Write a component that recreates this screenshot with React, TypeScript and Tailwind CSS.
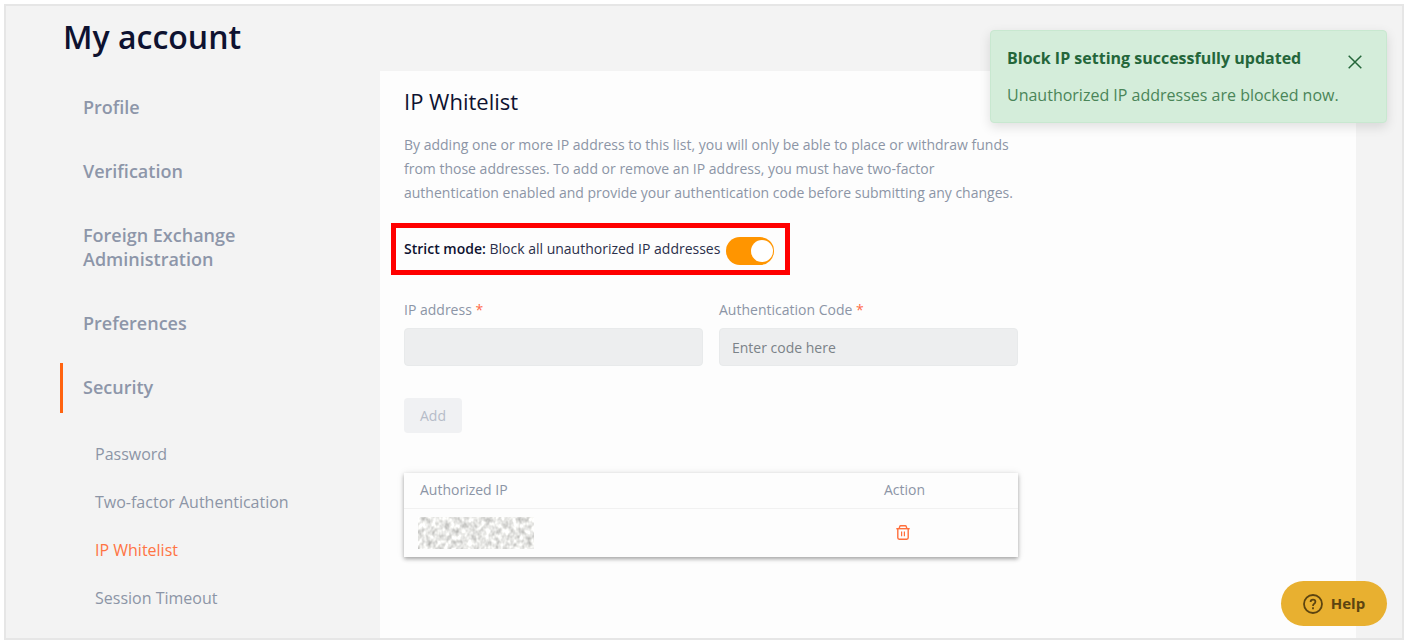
import { useState } from "react";

const sections = ["Profile", "Verification", "Foreign Exchange Administration", "Preferences", "Security"];
const securityPages = ["Password", "Two-factor Authentication", "IP Whitelist", "Session Timeout"];

function TrashIcon() {
  return (
    <svg viewBox="0 0 14 15" className="h-[15px] w-[14px]" fill="none" stroke="currentColor" strokeWidth="1.4" aria-hidden="true">
      <path d="M0.3 3.7H13.7" />
      <path d="M3.2 3.4L3.7 1.6Q3.9 0.8 4.8 0.8H9.2Q10.1 0.8 10.3 1.6L10.8 3.4" />
      <path d="M1.8 3.9V12.8Q1.8 14.2 3.2 14.2H10.8Q12.2 14.2 12.2 12.8V3.9" />
      <path d="M5.6 6.6V11.2M8.4 6.6V11.2" strokeWidth="1.2" />
    </svg>
  );
}

function MaskedAddress() {
  return (
    <svg className="block h-8 w-[116px]" role="img" aria-label="Hidden IP address">
      <filter id="grain" x="0" y="0" width="100%" height="100%" colorInterpolationFilters="sRGB">
        <feTurbulence type="fractalNoise" baseFrequency="0.22 0.17" numOctaves="2" seed="11" />
        <feColorMatrix values="0.5 0 0 0 0.66  0.5 0 0 0 0.66  0.5 0 0 0 0.65  0 0 0 0 1" />
      </filter>
      <rect width="116" height="32" filter="url(#grain)" />
    </svg>
  );
}

function Sidebar() {
  return (
    <nav aria-label="Account" className="w-80 shrink-0 pt-3">
      <ul className="flex flex-col gap-3.5">
        {sections.map((name) => (
          <li key={name}>
            <a
              href="#"
              className={`block border-l-[3px] pt-3 pb-3.5 pl-5 text-lg leading-6 font-semibold text-[#8d96a9] ${
                name === "Security" ? "border-[#ff6310]" : "border-transparent"
              }`}
            >
              <span className="block max-w-44">{name}</span>
            </a>
          </li>
        ))}
      </ul>
      <ul className="mt-[29px] flex flex-col gap-6 pl-[35px]">
        {securityPages.map((name) => (
          <li key={name}>
            <a
              href="#"
              className={`block text-base leading-6 ${name === "IP Whitelist" ? "text-[#ff7443]" : "text-[#8c95a6]"}`}
            >
              {name}
            </a>
          </li>
        ))}
      </ul>
    </nav>
  );
}

function Toast({ onClose }: { onClose: () => void }) {
  return (
    <div
      role="status"
      className="absolute top-6 right-[15px] flex w-[397px] items-start justify-between rounded-sm border border-[#c8e8d0] bg-[#d4edda] pt-[15px] pr-6 pb-[15px] pl-4 shadow-[0_4px_12px_rgba(0,0,0,0.12)]"
    >
      <div>
        <p className="text-base leading-6 font-bold text-[#24663a]">Block IP setting successfully updated</p>
        <p className="mt-[13px] text-base leading-6 text-[#4a8558]">Unauthorized IP addresses are blocked now.</p>
      </div>
      <button type="button" aria-label="Close" onClick={onClose} className="mt-[9px] text-[#24663a]">
        <svg viewBox="0 0 14 14" className="size-3.5" fill="none" stroke="currentColor" strokeWidth="1.5" aria-hidden="true">
          <path d="M0.7 0.7L13.3 13.3M13.3 0.7L0.7 13.3" />
        </svg>
      </button>
    </div>
  );
}

export default function App() {
  const [strict, setStrict] = useState(true);
  const [toast, setToast] = useState(true);

  return (
    <div className="flex min-h-screen bg-white p-1 font-['Open_Sans',sans-serif]">
      <div className="relative flex flex-1 flex-col border-2 border-[#e6e6e6] bg-[#f3f3f3] pr-[46px] pl-[54px]">
        <h1 className="pt-[9px] pb-3 pl-[3px] text-[32px] leading-[44px] font-semibold text-[#0e1230]">My account</h1>
        <div className="flex flex-1">
          <Sidebar />
          <main className="flex-1 bg-[#fdfdfd] px-6 pt-4">
            <div className="max-w-[614px]">
              <h2 className="text-[22px] leading-7 font-medium text-[#0e1230]">IP Whitelist</h2>
              <p className="mt-[18px] text-sm leading-6 text-[#8c95a6]">
                By adding one or more IP address to this list, you will only be able to place or withdraw funds from
                those addresses. To add or remove an IP address, you must have two-factor authentication enabled and
                provide your authentication code before submitting any changes.
              </p>

              <label className="mt-[18px] -ml-[13px] flex h-[52px] w-fit items-center gap-1.5 border-5 border-[#ff0000] pr-[11px] pl-2 text-sm leading-6 text-[#2b2f4a]">
                <span>
                  <strong className="font-semibold text-[#0e1230]">Strict mode:</strong> Block all unauthorized IP addresses
                </span>
                <input
                  type="checkbox"
                  role="switch"
                  checked={strict}
                  onChange={(e) => setStrict(e.target.checked)}
                  className="mt-1 flex h-7 w-12 appearance-none items-center rounded-full bg-gray-300 px-px before:size-[22px] before:rounded-full before:bg-white checked:justify-end checked:bg-[#ff9500]"
                />
              </label>

              <form onSubmit={(e) => e.preventDefault()} className="mt-[23px]">
                <div className="grid grid-cols-2 gap-4">
                  <div>
                    <label htmlFor="ip" className="block text-sm leading-6 text-[#8c95a6]">
                      IP address <span className="text-[#ff6b4a]">*</span>
                    </label>
                    <input
                      id="ip"
                      type="text"
                      className="mt-1.5 block h-[38px] w-full rounded-sm border border-[#e8eaeb] bg-[#edeeef] px-3 text-sm text-[#2b2f4a]"
                    />
                  </div>
                  <div>
                    <label htmlFor="code" className="block text-sm leading-6 text-[#8c95a6]">
                      Authentication Code <span className="text-[#ff6b4a]">*</span>
                    </label>
                    <input
                      id="code"
                      type="text"
                      placeholder="Enter code here"
                      className="mt-1.5 block h-[38px] w-full rounded-sm border border-[#e8eaeb] bg-[#edeeef] px-3 text-sm text-[#2b2f4a] placeholder:text-[#7b8288]"
                    />
                  </div>
                </div>
                <button type="submit" disabled className="mt-8 block h-[35px] rounded-sm bg-[#f0f1f3] px-4 text-sm text-[#b6bcc8]">
                  Add
                </button>
              </form>

              <table className="mt-10 w-full table-fixed text-left text-sm text-[#8c95a6] shadow-[0_2px_4px_rgba(0,0,0,0.32),0_0_8px_rgba(0,0,0,0.08)]">
                <thead>
                  <tr className="h-[35px] border-b border-[#f1f1f1]">
                    <th scope="col" className="pl-4 font-normal">Authorized IP</th>
                    <th scope="col" className="w-[134px] font-normal">Action</th>
                  </tr>
                </thead>
                <tbody className="bg-[#fdfdfd]">
                  <tr className="h-[49px]">
                    <td className="pl-3.5">
                      <MaskedAddress />
                    </td>
                    <td className="pl-3">
                      <button type="button" aria-label="Remove IP address" className="block text-[#ff6f3c]">
                        <TrashIcon />
                      </button>
                    </td>
                  </tr>
                </tbody>
              </table>
            </div>
          </main>
        </div>

        {toast && <Toast onClose={() => setToast(false)} />}

        <button
          type="button"
          className="absolute right-[15px] bottom-3 flex h-[45px] w-[106px] items-center justify-center gap-2 rounded-full bg-[#e8b030] text-[15px] font-bold text-[#5c4410]"
        >
          <svg viewBox="0 0 20 20" className="size-5" fill="none" stroke="currentColor" strokeWidth="1.8" aria-hidden="true">
            <circle cx="10" cy="10" r="9" />
            <path d="M7.6 8Q7.6 5.6 10 5.6T12.4 7.8Q12.4 9 11.2 9.8T10 11.9" />
            <path d="M10 13.3V15.2" />
          </svg>
          Help
        </button>
      </div>
    </div>
  );
}
